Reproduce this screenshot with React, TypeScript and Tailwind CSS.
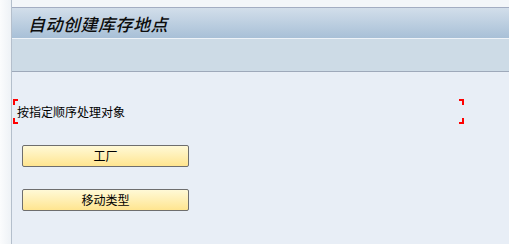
export default function App() {
  const cjk = { fontFamily: '"Noto Sans CJK SC", "Noto Sans", sans-serif' };

  return (
    <div className="flex h-[244px] w-[509px] overflow-hidden bg-[#e8eef6]" style={cjk}>
      {/* Left gutter */}
      <div className="w-[11px] shrink-0 bg-gradient-to-r from-[#fbfcfd] to-[#eef2f6]" />

      {/* Main panel */}
      <div className="flex flex-1 flex-col border-l border-[#b4bfcc]">
        <div className="h-[7px] shrink-0 bg-[#f3f6f9]" />

        {/* Title bar */}
        <div className="flex h-[31px] shrink-0 items-center border-t border-[#a3adc2] bg-gradient-to-b from-[#d2deea] to-[#a8c0d7] pl-[16px]">
          <span className="text-[17px] font-medium italic leading-none tracking-[0.5px] text-[#0d0d0d]">
            自动创建库存地点
          </span>
        </div>

        {/* Toolbar */}
        <div className="h-[34px] shrink-0 border-t border-[#eef3f8] border-b border-b-[#9ea9ba] bg-[#cddbe6]" />

        {/* Content */}
        <div className="flex flex-1 flex-col bg-[#e8eef6]">
          <div className="relative mt-[27px] flex h-[25px] w-[452px] items-center pl-[5px]">
            <span className="absolute left-[1px] top-0 h-[6px] w-[5px] border-l-2 border-t-2 border-[#ff0000]" />
            <span className="absolute bottom-0 left-[1px] h-[6px] w-[5px] border-b-2 border-l-2 border-[#ff0000]" />
            <span className="absolute right-0 top-0 h-[6px] w-[5px] border-r-2 border-t-2 border-[#ff0000]" />
            <span className="absolute bottom-0 right-0 h-[6px] w-[5px] border-b-2 border-r-2 border-[#ff0000]" />
            <span className="text-[12px] leading-none text-black">按指定顺序处理对象</span>
          </div>

          <div className="ml-[10px] mt-[21px] flex flex-col gap-[22px]">
            {["工厂", "移动类型"].map((label) => (
              <button
                key={label}
                type="button"
                className="flex h-[22px] w-[167px] items-center justify-center rounded-[2px] border border-[#6e6e6e] bg-gradient-to-b from-[#fff9d6] to-[#ffe58f] text-[12px] leading-none text-black"
              >
                {label}
              </button>
            ))}
          </div>
        </div>
      </div>
    </div>
  );
}
